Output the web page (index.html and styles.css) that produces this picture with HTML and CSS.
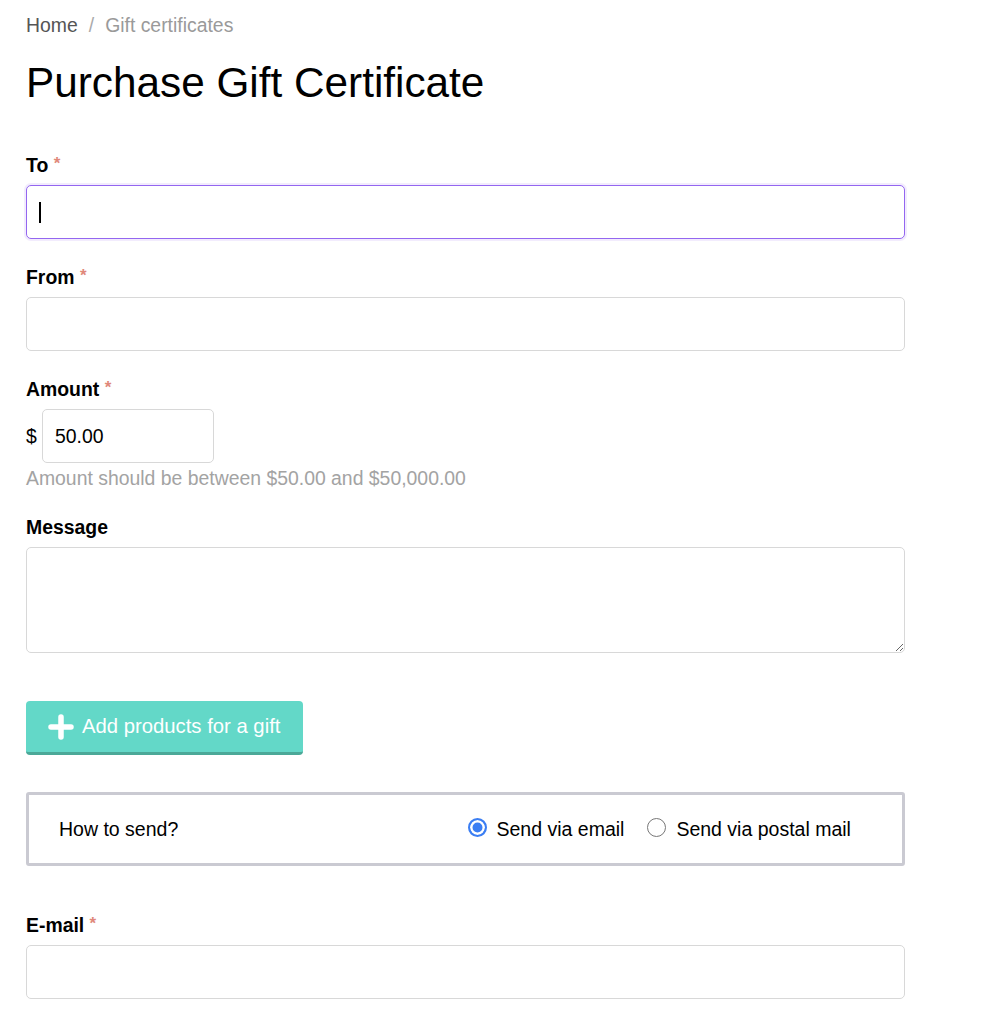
FILE: index.html
```html
<!DOCTYPE html>
<html lang="en">
<head>
<meta charset="utf-8">
<title>Purchase Gift Certificate</title>
<link rel="stylesheet" href="styles.css">
</head>
<body>
<div class="page">
  <nav class="crumbs">
    <a class="crumb-home" href="#">Home</a>
    <span class="crumb-sep">/</span>
    <span class="crumb-current">Gift certificates</span>
  </nav>
  <h1 class="title">Purchase Gift Certificate</h1>

  <form class="form">
    <div class="field">
      <label class="label">To <span class="req">*</span></label>
      <div class="input input-focus"><span class="caret"></span></div>
    </div>
    <div class="field">
      <label class="label">From <span class="req">*</span></label>
      <input class="input" type="text">
    </div>
    <div class="field field-amount">
      <label class="label">Amount <span class="req">*</span></label>
      <div class="amount-row">
        <span class="currency">$</span>
        <input class="input amount-input" type="text" value="50.00">
      </div>
      <div class="hint">Amount should be between $50.00 and $50,000.00</div>
    </div>
    <div class="field">
      <label class="label">Message</label>
      <textarea class="input textarea"></textarea>
    </div>

    <button type="button" class="add-btn">
      <svg class="plus" width="26" height="26" viewBox="0 0 26 26"><path d="M13 3v20M3 13h20" stroke="#fff" stroke-width="5.5" stroke-linecap="round" fill="none"/></svg>
      <span>Add products for a gift</span>
    </button>

    <div class="send-box">
      <div class="send-label">How to send?</div>
      <div class="send-options">
        <label class="radio-opt"><span class="radio checked"></span>Send via email</label>
        <label class="radio-opt"><span class="radio"></span>Send via postal mail</label>
      </div>
    </div>

    <div class="field field-email">
      <label class="label">E-mail <span class="req">*</span></label>
      <input class="input" type="text">
    </div>
  </form>
</div>
</body>
</html>
```
FILE: styles.css
```css
* { box-sizing: border-box; }
html, body { margin: 0; padding: 0; background: #fff; }
body {
  font-family: "Liberation Sans", Arial, Helvetica, sans-serif;
  font-size: 19.4px;
  color: #000;
}
.page {
  width: 905px;
  padding: 13px 0 0 26px;
}
.crumbs {
  line-height: 24px;
  height: 24px;
  display: flex;
  gap: 11px;
}
.crumb-home { color: #555; text-decoration: none; }
.crumb-sep { color: #aaa; }
.crumb-current { color: #9a9a9a; }
.title {
  font-size: 42.3px;
  font-weight: normal;
  line-height: 50px;
  margin: 21px 0 0 0;
}
.form { margin-top: 45px; }
.field { margin-bottom: 26px; }
.field-amount { margin-bottom: 25px; }
.label {
  display: block;
  font-weight: bold;
  line-height: 24px;
  height: 24px;
  margin-bottom: 8px;
}
.req {
  color: #e0887a;
  font-weight: bold;
  font-size: 17px;
  line-height: 1;
  vertical-align: 3px;
}
.input {
  display: block;
  width: 879px;
  height: 54px;
  border: 1px solid #d8d8d8;
  border-radius: 5px;
  background: #fff;
  font-family: inherit;
  font-size: 19.4px;
  padding: 0 13px;
  outline: none;
  color: #000;
}
.input-focus {
  border: 1.5px solid #9466f0;
  box-shadow: 0 0 0 2px rgba(148, 102, 240, 0.12);
  display: flex;
  align-items: center;
  padding-left: 12px;
}
.caret {
  display: block;
  width: 2px;
  height: 21px;
  background: #000;
}
.amount-row {
  display: flex;
  align-items: center;
  gap: 6px;
}
.currency { width: 10px; }
.amount-input { width: 172px; padding-left: 12px; }
.hint {
  color: #a3a3a3;
  line-height: 24px;
  margin-top: 3px;
}
.textarea {
  height: 106px;
  resize: vertical;
  padding: 10px 13px;
}
.add-btn {
  display: flex;
  align-items: center;
  gap: 8px;
  width: 277px;
  height: 54px;
  margin-top: 48px;
  padding: 0 0 0 22px;
  background: #63d8c8;
  border: none;
  border-bottom: 3px solid #4ba898;
  border-radius: 4px;
  color: #fff;
  font-family: inherit;
  font-size: 20.3px;
  cursor: pointer;
}
.plus { display: block; }
.send-box {
  margin-top: 37px;
  width: 879px;
  height: 74px;
  border: 3px solid #cacad2;
  border-radius: 3px;
  display: grid;
  grid-template-columns: 1fr 1fr;
  align-items: center;
  padding: 1px 30px 0;
}
.send-label { font-size: 19.5px; }
.send-options {
  display: flex;
  gap: 23px;
  font-size: 19.5px;
  padding-left: 2px;
}
.radio-opt {
  display: flex;
  align-items: center;
  gap: 10px;
}
.radio {
  display: inline-block;
  width: 19px;
  height: 19px;
  border-radius: 50%;
  border: 1px solid #777;
  background: #fff;
  margin-top: -4px;
}
.radio.checked {
  border: 2px solid #3b7ef3;
  box-shadow: inset 0 0 0 2.5px #fff;
  background: #3b7ef3;
}
.field-email { margin-top: 47px; }
```
